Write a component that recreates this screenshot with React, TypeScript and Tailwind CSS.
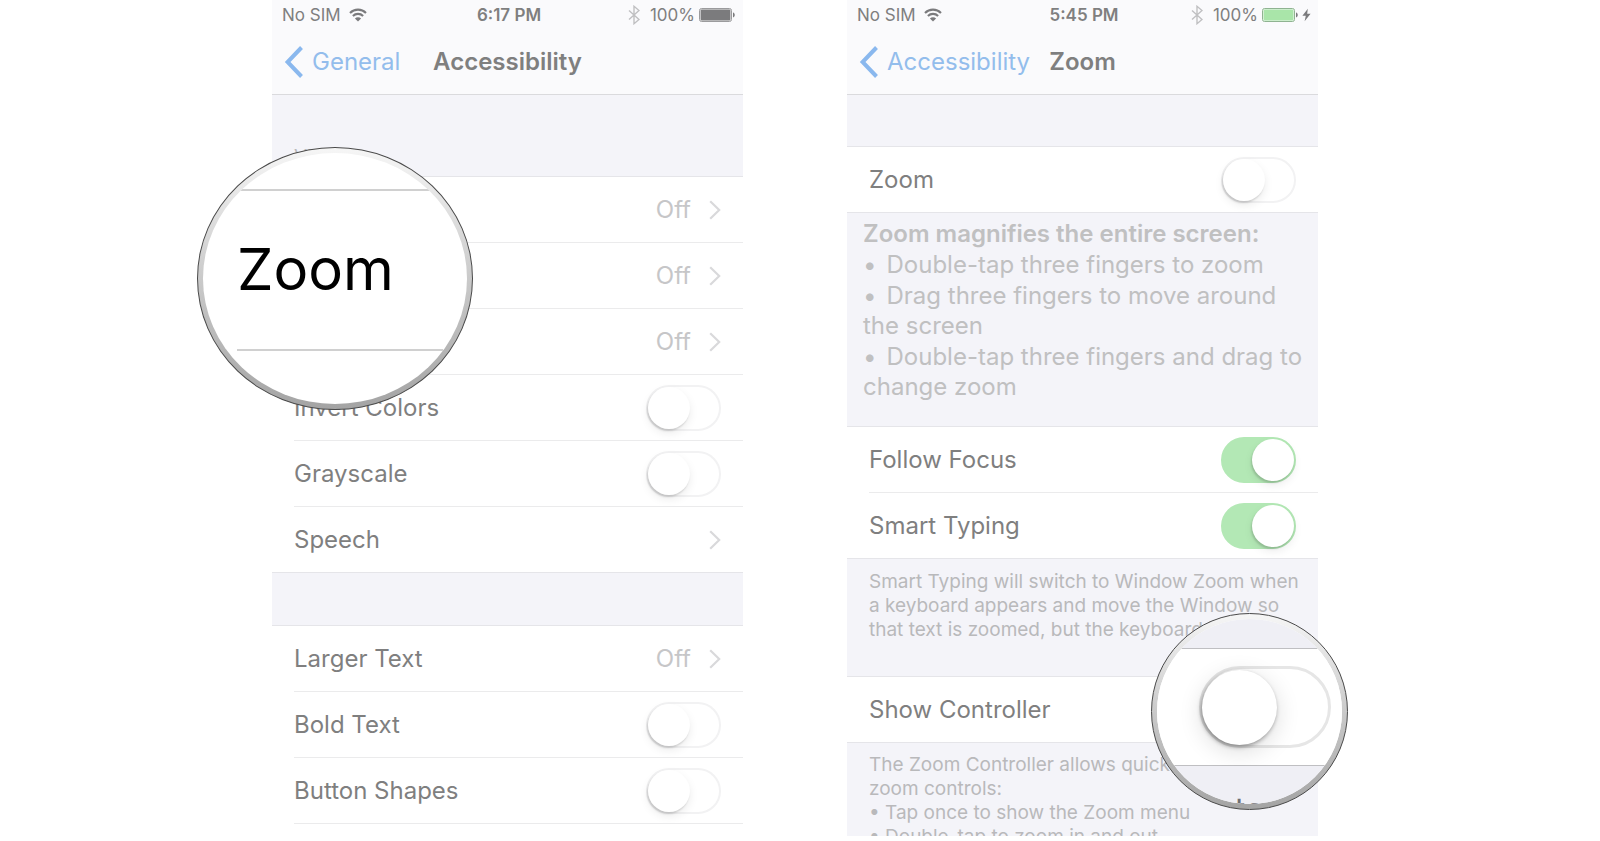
import { useState, type ReactNode } from "react";

function WifiIcon() {
  return (
    <svg viewBox="0 0 18 14" className="h-[14px] w-[18px]" fill="none" stroke="#7b7b7d" strokeWidth="2.1" aria-hidden="true">
      <path d="M1 4.9a11.3 11.3 0 0 1 16 0" />
      <path d="M3.9 8a7.2 7.2 0 0 1 10.2 0" />
      <path d="M9 13.6 5.9 10.5a4.4 4.4 0 0 1 6.2 0Z" fill="#7b7b7d" stroke="none" />
    </svg>
  );
}

function BluetoothIcon() {
  return (
    <svg viewBox="0 0 12 20" className="h-5 w-3" fill="none" stroke="#c0c0c2" strokeWidth="1.4" aria-hidden="true">
      <path d="M1 5.5 11 14.5 6 18.7V1.3L11 5.5 1 14.5" />
    </svg>
  );
}

function BatteryIcon({ charging }: { charging: boolean }) {
  return (
    <svg viewBox="0 0 37 14" className="h-[14px] w-[37px]" aria-hidden="true">
      <rect x="0.5" y="0.5" width="32" height="13" rx="2" fill={charging ? "#eef6ef" : "#f4f4f5"} stroke={charging ? "#8fb391" : "#9b9b9d"} />
      <rect x="1.6" y="1.6" width="29.8" height="10.8" rx="1" fill={charging ? "#a9e5a9" : "#7b7b7d"} />
      <path d="M34 4.6c2.3.6 2.3 4.2 0 4.8Z" fill="#7b7b7d" />
    </svg>
  );
}

function BoltIcon() {
  return (
    <svg viewBox="0 0 9 14" className="h-[14px] w-[9px]" fill="#7b7b7d" aria-hidden="true">
      <path d="M5.8.8.4 7.8h3.4L2.6 13.2 8.6 5.8H5.2Z" />
    </svg>
  );
}

function RowChevron() {
  return (
    <svg viewBox="0 0 12 20" className="h-5 w-3" fill="none" stroke="#d9d9db" strokeWidth="2.2" aria-hidden="true">
      <path d="m1.2 1.2 9 8.8-9 8.8" />
    </svg>
  );
}

type HeaderProps = { time: string; back: string; title: string; charging?: boolean };

function Header({ time, back, title, charging = false }: HeaderProps) {
  return (
    <header className="h-[95px] shrink-0 border-b border-[#dadadd] bg-[#fafafc]">
      <div className="grid h-[30px] grid-cols-[1fr_auto_1fr] items-center pl-[10px] pr-[7px] text-[17px] text-[#7f7f7f]">
        <div className="flex items-center gap-2">
          <span>No SIM</span>
          <WifiIcon />
        </div>
        <time className="font-semibold">{time}</time>
        <div className="flex items-center justify-end">
          <BluetoothIcon />
          <span className="ml-[10px] mr-1">100%</span>
          <BatteryIcon charging={charging} />
          {charging && (
            <span className="ml-[3px]">
              <BoltIcon />
            </span>
          )}
        </div>
      </div>
      <div className="grid h-16 grid-cols-[1fr_auto_1fr] items-center px-3 text-2xl">
        <a href="#back" className="flex items-center gap-[9px] text-[#93bdec]">
          <svg viewBox="0 0 19 32" className="h-8 w-[19px]" fill="none" stroke="#8ab8ee" strokeWidth="4" aria-hidden="true">
            <path d="M17.5 1.5 3.6 16 17.5 30.5" />
          </svg>
          {back}
        </a>
        <h1 className="font-semibold text-[#7f7f7f]">{title}</h1>
      </div>
    </header>
  );
}

function Row({ children }: { children: ReactNode }) {
  return (
    <div className="group bg-white pl-[22px]">
      <div className="flex h-[66px] items-center justify-between border-b border-[#ebebec] pr-[22px] group-last:h-[65px] group-last:border-b-0">
        {children}
      </div>
    </div>
  );
}

function LinkRow({ label, value }: { label: string; value?: string }) {
  return (
    <Row>
      <a href="#detail" className="flex grow items-center text-[#7f7f7f]">
        <span className="grow">{label}</span>
        {value && <span className="mr-[18px] text-[#c6c6c8]">{value}</span>}
        <RowChevron />
      </a>
    </Row>
  );
}

function ToggleRow({ id, label, on = false }: { id: string; label: string; on?: boolean }) {
  const [checked, setChecked] = useState(on);
  return (
    <Row>
      <label htmlFor={id} className="text-[#7f7f7f]">
        {label}
      </label>
      <input
        id={id}
        type="checkbox"
        role="switch"
        checked={checked}
        onChange={(e) => setChecked(e.target.checked)}
        className="flex h-[46px] w-[75px] appearance-none items-center rounded-full border-2 border-[#f2f2f3] bg-white before:size-[42px] before:rounded-full before:bg-white before:shadow-[-1px_2px_2px_#00000024,0_4px_10px_#00000014] checked:justify-end checked:border-[#b3e8b5] checked:bg-[#b3e8b5]"
      />
    </Row>
  );
}

function Group({ children, className = "" }: { children: ReactNode; className?: string }) {
  return <div className={`shrink-0 border-y border-[#e5e5e9] ${className}`}>{children}</div>;
}

function Lens({ children, className }: { children: ReactNode; className: string }) {
  return (
    <div className={`absolute rounded-[50%] border border-[#4a4a4a] bg-linear-to-b from-[#f6f6f6] via-[#cacaca] to-[#a4a4a4] p-[5px] ${className}`}>
      <div className="flex h-full flex-col overflow-hidden rounded-[50%] bg-white">{children}</div>
    </div>
  );
}

function AccessibilityScreen() {
  return (
    <div className="relative min-h-0 w-[471px]">
      <section className="flex h-full flex-col overflow-hidden bg-[#f4f4f9]">
        <Header time="6:17 PM" back="General" title="Accessibility" />
        <h2 className="h-[81px] shrink-0 px-[22px] pt-[50px] text-[19px] leading-6 text-[#b9b9bb]">VISION</h2>
        <Group>
          <LinkRow label="VoiceOver" value="Off" />
          <LinkRow label="Zoom" value="Off" />
          <LinkRow label="Magnifier" value="Off" />
          <ToggleRow id="invert" label="Invert Colors" />
          <ToggleRow id="grayscale" label="Grayscale" />
          <LinkRow label="Speech" />
        </Group>
        <Group className="mt-[52px] grow border-b-0 bg-white">
          <LinkRow label="Larger Text" value="Off" />
          <ToggleRow id="bold" label="Bold Text" />
          <ToggleRow id="shapes" label="Button Shapes" />
          <div className="bg-white" />
        </Group>
      </section>
      <Lens className="-left-[75px] top-[147px] h-[263px] w-[276px]">
        <div className="ml-[34px] mr-6 mt-9 flex h-[162px] items-center border-y-2 border-[#d0d0d0] text-[58px] text-black">
          Zoom
        </div>
      </Lens>
    </div>
  );
}

function ZoomScreen() {
  return (
    <div className="relative min-h-0 w-[471px]">
      <section className="flex h-full flex-col overflow-hidden bg-[#f4f4f9]">
        <Header time="5:45 PM" back="Accessibility" title="Zoom" charging />
        <Group className="mt-[51px]">
          <ToggleRow id="zoom" label="Zoom" />
        </Group>
        <div className="h-[213px] shrink-0 pl-4 pr-2 pt-[6px] leading-[30px] text-[#c0c0c1]">
          <h2 className="font-semibold">Zoom magnifies the entire screen:</h2>
          <ul className="flex flex-col gap-px pt-px">
            <li><span className="mr-[10px]">•</span>Double-tap three fingers to zoom</li>
            <li><span className="mr-[10px]">•</span>Drag three fingers to move around the screen</li>
            <li><span className="mr-[10px]">•</span>Double-tap three fingers and drag to change zoom</li>
          </ul>
        </div>
        <Group>
          <ToggleRow id="focus" label="Follow Focus" on />
          <ToggleRow id="typing" label="Smart Typing" on />
        </Group>
        <p className="h-[117px] shrink-0 pl-[22px] pr-4 pt-[11px] text-[19px] leading-6 text-[#b9b9bb]">
          Smart Typing will switch to Window Zoom when a keyboard appears and move the Window so that text is zoomed, but the keyboard is not.
        </p>
        <Group>
          <ToggleRow id="controller" label="Show Controller" />
        </Group>
        <div className="shrink-0 pl-[22px] pr-4 pt-[10px] text-[19px] leading-6 text-[#b9b9bb]">
          <p>The Zoom Controller allows quick access to zoom controls:</p>
          <ul>
            <li>• Tap once to show the Zoom menu</li>
            <li>• Double-tap to zoom in and out</li>
          </ul>
        </div>
      </section>
      <Lens className="left-[304px] top-[613px] size-[197px]">
        <div className="h-[29px] shrink-0 bg-[#efeff5]" />
        <div className="flex h-[118px] shrink-0 items-center justify-center border-y border-[#bfbfc2] bg-white pl-[30px]">
          <div className="flex h-[82px] w-[132px] items-center rounded-full border-[3px] border-[#e6e6e6]">
            <div className="size-[75px] shrink-0 rounded-full bg-white shadow-[-1px_2px_4px_#00000060,0_6px_24px_#00000024]" />
          </div>
        </div>
        <div className="grow bg-[#efeff5] pt-7 text-center text-[32px] leading-8 text-[#6d6d72]">to</div>
      </Lens>
    </div>
  );
}

export default function App() {
  return (
    <main className="flex h-screen justify-center gap-[104px] overflow-hidden bg-white pb-[5px] pr-[10px] font-['Inter','Liberation_Sans',sans-serif] text-2xl">
      <AccessibilityScreen />
      <ZoomScreen />
    </main>
  );
}
